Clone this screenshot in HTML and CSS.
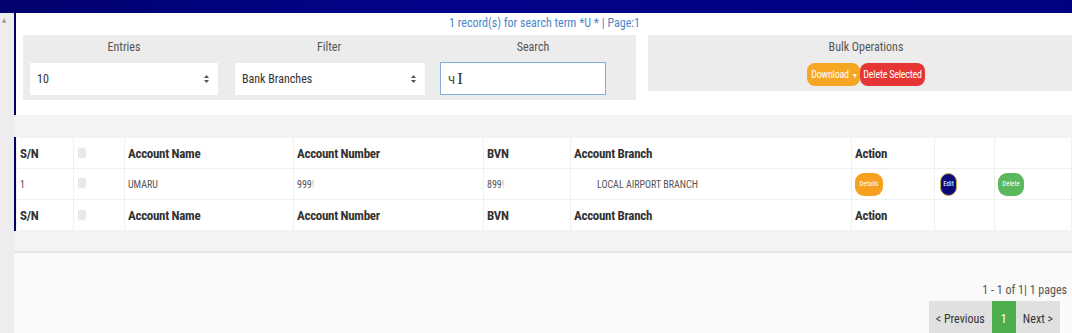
FILE: index.html
```html
<!DOCTYPE html>
<html lang="en">
<head>
    <meta charset="UTF-8">
    <meta name="viewport" content="width=device-width, initial-scale=1.0">
    <title>Bank Branches</title>
    <link rel="stylesheet" href="styles.css">
</head>
<body>
    <div class="topbar"></div>
    <div class="page">
        <div class="sidebar"><span class="scroll-up">&#9650;</span></div>
        <div class="main">
            <div class="panel filters-panel">
                <div class="status">1 record(s) for search term *U * | Page:1</div>
                <div class="controls">
                    <div class="filter-box">
                        <div class="field">
                            <label>Entries</label>
                            <div class="select select-entries">
                                <span>10</span>
                                <svg class="arrows" width="5" height="8" viewBox="0 0 5 8"><path d="M2.5 0 5 3H0zM2.5 8 5 5H0z" fill="#555"/></svg>
                            </div>
                        </div>
                        <div class="field">
                            <label>Filter</label>
                            <div class="select select-filter">
                                <span>Bank Branches</span>
                                <svg class="arrows" width="5" height="8" viewBox="0 0 5 8"><path d="M2.5 0 5 3H0zM2.5 8 5 5H0z" fill="#555"/></svg>
                            </div>
                        </div>
                        <div class="field">
                            <label>Search</label>
                            <div class="search-input"><span>ч</span><span class="cursor">I</span></div>
                        </div>
                    </div>
                    <div class="bulk-box">
                        <label>Bulk Operations</label>
                        <div class="bulk-buttons">
                            <button class="btn btn-orange">Download <span class="caret">&#9662;</span></button>
                            <button class="btn btn-red">Delete Selected</button>
                        </div>
                    </div>
                </div>
            </div>

            <div class="panel table-panel">
                <table class="records">
                    <thead>
                        <tr>
                            <th class="c-sn">S/N</th>
                            <th class="c-check"><span class="check"></span></th>
                            <th class="c-name">Account Name</th>
                            <th class="c-number">Account Number</th>
                            <th class="c-bvn">BVN</th>
                            <th class="c-branch">Account Branch</th>
                            <th class="c-action">Action</th>
                            <th class="c-edit"></th>
                            <th></th>
                        </tr>
                    </thead>
                    <tbody>
                        <tr>
                            <td>1</td>
                            <td><span class="check"></span></td>
                            <td>UMARU</td>
                            <td>999<span class="cut">!</span></td>
                            <td>899<span class="cut">!</span></td>
                            <td class="branch">LOCAL AIRPORT BRANCH</td>
                            <td><button class="pill pill-orange">Details</button></td>
                            <td><button class="pill pill-navy">Edit</button></td>
                            <td><button class="pill pill-green">Delete</button></td>
                        </tr>
                    </tbody>
                    <tfoot>
                        <tr>
                            <th>S/N</th>
                            <th><span class="check"></span></th>
                            <th>Account Name</th>
                            <th>Account Number</th>
                            <th>BVN</th>
                            <th>Account Branch</th>
                            <th>Action</th>
                            <th></th>
                            <th></th>
                        </tr>
                    </tfoot>
                </table>
            </div>

            <div class="footer-panel">
                <div class="page-info">1 - 1 of 1| 1 pages</div>
                <div class="pager">
                    <button class="page-btn">&lt; Previous</button>
                    <button class="page-btn current">1</button>
                    <button class="page-btn">Next &gt;</button>
                </div>
            </div>
        </div>
    </div>
</body>
</html>
```

FILE: styles.css
```css
body {
    margin: 0;
    font-family: 'Liberation Sans Narrow', 'Roboto Condensed', 'DejaVu Sans Condensed', sans-serif;
    font-size: 12px;
    color: #444;
    background-color: #f3f3f3;
    overflow: hidden;
}

.topbar {
    height: 13px;
    background: linear-gradient(to right, #00006e, #03038a 40%, #000080);
}

.page {
    display: flex;
}

.sidebar {
    width: 14px;
    background-color: #ededed;
    padding-top: 3px;
}

.scroll-up {
    display: block;
    font-size: 6px;
    color: #999;
    padding-left: 2px;
}

.main {
    flex: 1;
    min-width: 0;
}

.panel {
    border-left: 2px solid #000066;
    background-color: #fff;
}

.filters-panel {
    height: 102px;
}

.status {
    width: 624px;
    text-align: right;
    color: #4a86c8;
    padding-top: 3px;
    height: 19px;
    line-height: 14px;
}

.controls {
    display: flex;
    align-items: flex-start;
    gap: 12px;
    padding-left: 7px;
}

.filter-box {
    display: grid;
    grid-template-columns: 205px 205px 203px;
    background-color: #ececec;
    height: 65px;
}

.field {
    display: flex;
    flex-direction: column;
    padding-left: 7px;
}

.field label,
.bulk-box label {
    text-align: center;
    color: #555;
    font-size: 12px;
    padding-top: 5px;
    height: 23px;
    line-height: 14px;
}

.field label {
    padding-right: 10px;
}

.select {
    display: flex;
    justify-content: space-between;
    align-items: center;
    height: 32px;
    background-color: #fff;
    padding: 0 9px 0 7px;
    color: #333;
    box-sizing: border-box;
}

.select-entries {
    width: 188px;
}

.select-filter {
    width: 190px;
}

.search-input {
    width: 166px;
    height: 33px;
    margin-top: -1px;
    box-sizing: border-box;
    border: 1px solid #80aee0;
    background-color: #fff;
    display: flex;
    align-items: center;
    padding-left: 7px;
    color: #555;
    font-size: 15px;
}

.cursor {
    font-family: 'Liberation Serif', serif;
    font-size: 17px;
    color: #333;
    margin-left: 2px;
}

.bulk-box {
    flex: 1;
    height: 56px;
    margin-right: -12px;
    background-color: #ececec;
    display: flex;
    flex-direction: column;
    align-items: center;
}

.bulk-buttons {
    display: flex;
}

.btn {
    height: 23px;
    border: none;
    border-radius: 8px;
    color: #fff;
    font-family: inherit;
    font-size: 10px;
    letter-spacing: -0.2px;
    padding: 0 4px;
    white-space: nowrap;
}

.btn-orange {
    background-color: #f5a623;
}

.btn-red {
    background-color: #e63535;
    padding: 0 3px;
}

.caret {
    font-size: 8px;
    margin-left: 2px;
}

.table-panel {
    margin-top: 22px;
}

.records {
    width: 100%;
    border-collapse: collapse;
    background-color: #fff;
}

.records th,
.records td {
    height: 31px;
    padding: 0 3px;
    text-align: left;
    border: 1px solid #f0f0f0;
    box-sizing: border-box;
}

.records th {
    font-size: 13px;
    font-weight: bold;
    color: #333;
    letter-spacing: -0.3px;
}

.records td {
    font-size: 10px;
    color: #555;
}

.cut {
    color: #bbb;
}

.c-sn { width: 57px; }
.c-check { width: 51px; }
.c-name { width: 169px; }
.c-number { width: 190px; }
.c-bvn { width: 87px; }
.c-branch { width: 281px; }
.c-action { width: 83px; }
.c-edit { width: 60px; }

.records .branch {
    padding-left: 26px;
}

.check {
    display: inline-block;
    width: 8px;
    height: 10px;
    margin-left: 1px;
    border-radius: 2px;
    background-color: #e8e8e8;
}

.pill {
    height: 23px;
    border: none;
    border-radius: 9px;
    color: #fff;
    font-family: inherit;
    font-size: 7px;
    padding: 0 2px;
}

.pill-orange {
    background-color: #f6a020;
    width: 28px;
}

.pill-navy {
    background-color: #0a0a7a;
    width: 17px;
    margin-left: 2px;
    border: 1px solid #c9b24a;
    padding: 0;
}

.pill-green {
    background-color: #5cb85c;
    width: 26px;
}

.footer-panel {
    margin-top: 20px;
    border-top: 2px solid #e6e6e6;
    background-color: #fafafa;
    height: 90px;
    display: flex;
    flex-direction: column;
    align-items: flex-end;
    padding-right: 5px;
}

.page-info {
    margin-top: 30px;
    font-size: 12px;
    color: #555;
}

.pager {
    display: flex;
    margin-top: 4px;
    padding-right: 7px;
}

.page-btn {
    height: 36px;
    border: none;
    background-color: #e0e0e0;
    font-family: inherit;
    font-size: 12px;
    color: #333;
    padding: 0 7px;
}

.page-btn.current {
    background-color: #4cae4c;
    color: #fff;
    width: 24px;
    padding: 0;
}
```
